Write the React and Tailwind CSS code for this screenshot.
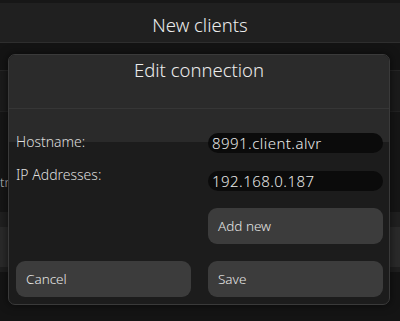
import React from "react";

const font = { fontFamily: '"Noto Sans", "Open Sans", sans-serif' };

/* ================= BACKGROUND PAGE ================= */
const BackgroundPage = () => (
  <div className="flex flex-col h-[321px] bg-[#141414]">
    <div className="h-[3px] bg-[#171717]" />
    <div className="h-[40px] bg-[#202020] flex items-center justify-center border-b border-[#2e2e2e]">
      <span className="text-[18.5px] text-[#ececec] leading-none pt-[5px]">New clients</span>
    </div>
    <div className="h-[27px]" />
    <div className="h-[41px] bg-[#1b1b1b] border-t border-[#262626]" />
    <div className="h-[101px] bg-[#161616] border-t border-[#222] relative">
      <span className="absolute left-0 top-[64px] text-[13px] text-[#c4c4c4] leading-none">tn</span>
    </div>
    <div className="h-[15px] bg-[#202020]" />
    <div className="h-[40px] bg-[#2a2a2a]" />
    <div className="h-[5px] bg-[#1f1f1f]" />
  </div>
);

/* ================= DIALOG ================= */
const Field = ({ value }) => (
  <div className="h-[20px] rounded-full bg-[#0b0b0b] flex items-center px-[4px]">
    <span className="text-[15px] tracking-[0.03em] text-[#eaeaea] leading-none">{value}</span>
  </div>
);

const Button = ({ label }) => (
  <button className="h-[36px] w-full rounded-[9px] bg-[#3c3c3c] flex items-center px-[10px] text-left">
    <span className="text-[13.5px] text-[#e6e6e6] leading-none pt-[2px]">{label}</span>
  </button>
);

const EditDialog = () => (
  <div className="absolute left-[8px] top-[54px] w-[382px] h-[251px] rounded-[7px] border border-[#3a3a3a] bg-[#1c1c1c] overflow-hidden shadow-[0_0_10px_rgba(0,0,0,0.6)] flex flex-col">
    <div className="h-[54px] bg-[#2b2b2b] border-b border-[#363636] flex justify-center pt-[3px]">
      <span className="text-[18.5px] text-[#ececec] leading-[24px]">Edit connection</span>
    </div>
    <div className="h-[33px] bg-[#2a2a2a]" />

    <div className="absolute left-[7px] top-[78px] grid grid-cols-[175px_175px] gap-x-[17px]">
      <span className="text-[14px] text-[#dedede] leading-none mt-[2px]">Hostname:</span>
      <Field value="8991.client.alvr" />

      <span className="text-[14px] text-[#dedede] leading-none pt-[15px]">IP Addresses:</span>
      <div className="pt-[18px]">
        <Field value="192.168.0.187" />
      </div>

      <div />
      <div className="pt-[17px]">
        <Button label="Add new" />
      </div>

      <div className="pt-[17px]">
        <Button label="Cancel" />
      </div>
      <div className="pt-[17px]">
        <Button label="Save" />
      </div>
    </div>
  </div>
);

export default function App() {
  return (
    <div className="relative w-[400px] h-[321px] overflow-hidden font-light" style={font}>
      <BackgroundPage />
      <EditDialog />
    </div>
  );
}
